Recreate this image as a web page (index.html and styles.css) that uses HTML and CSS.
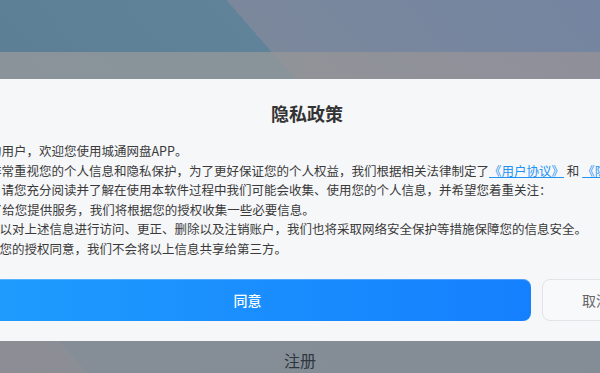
FILE: index.html
```html
<!DOCTYPE html>
<html lang="zh-CN">
<head>
    <meta charset="UTF-8">
    <meta name="viewport" content="width=device-width, initial-scale=1.0">
    <title>城通网盘 - 隐私政策</title>
    <link rel="stylesheet" href="styles.css">
</head>
<body>

    <header class="top-bar"></header>
    <div class="tab-band"></div>

    <section class="privacy-dialog">
        <h2 class="dialog-title">隐私政策</h2>
        <div class="dialog-body">
            <p>尊敬的用户，欢迎您使用城通网盘APP。</p>
            <p>我们非常重视您的个人信息和隐私保护，为了更好保证您的个人权益，我们根据相关法律制定了<a href="#">《用户协议》</a> 和 <a href="#">《隐私政策》</a></p>
            <p>为此，请您充分阅读并了解在使用本软件过程中我们可能会收集、使用您的个人信息，并希望您着重关注：</p>
            <p>1. 为了给您提供服务，我们将根据您的授权收集一些必要信息。</p>
            <p>2.您可以对上述信息进行访问、更正、删除以及注销账户，我们也将采取网络安全保护等措施保障您的信息安全。</p>
            <p>3.未经您的授权同意，我们不会将以上信息共享给第三方。</p>
        </div>
        <div class="dialog-actions">
            <button class="btn-agree">同意</button>
            <button class="btn-cancel">取消</button>
        </div>
    </section>

    <footer class="bottom-bar">注册</footer>

</body>
</html>
```

FILE: styles.css
```css
/* Global Styles */
html,
body {
    margin: 0;
    padding: 0;
    overflow: hidden;
}

body {
    width: 600px;
    height: 373px;
    font-family: "Noto Sans CJK SC", "Noto Sans", sans-serif;
    color: #3a3a3a;
    background-color: #848d96;
}

/* page behind the dialog (dimmed) */
.top-bar {
    height: 52px;
    background: linear-gradient(49deg, #5c7f95 0, #61839a 205px, #7b889c 205px, #7485a1 100%);
}

.tab-band {
    height: 27px;
    background: linear-gradient(49deg, #8a939a 0, #88949a 223px, #909398 223px, #8f8f9a 100%);
}

.bottom-bar {
    height: 32px;
    box-sizing: border-box;
    padding-top: 7px;
    line-height: 24px;
    text-align: center;
    font-size: 16px;
    color: #2e3741;
    background: linear-gradient(48deg, #8d8e95 0, #8b8e94 65px, #858e96 65px, #848d96 100%);
}

/* dialog */
.privacy-dialog {
    width: 734px;
    margin-left: -60px;
    box-sizing: border-box;
    height: 262px;
    padding: 22px 24px 20px;
    background-color: #f6f7f9;
    box-shadow: 0 1px 0 rgba(0, 0, 0, 0.12);
}

.dialog-title {
    margin: 0;
    font-size: 18px;
    line-height: 24px;
    font-weight: bold;
    color: #333;
    text-align: center;
}

.dialog-body {
    margin-top: 16px;
    font-size: 12.5px;
    line-height: 19.6px;
}

.dialog-body p {
    margin: 0;
    white-space: nowrap;
}

.dialog-body a {
    color: #1f93f5;
    text-decoration: underline;
}

.dialog-actions {
    display: flex;
    gap: 11px;
    margin-top: 20px;
}

.dialog-actions button {
    height: 42px;
    border-radius: 8px;
    font-family: inherit;
    font-size: 14px;
}

.btn-agree {
    flex: 1;
    border: none;
    color: white;
    font-weight: 500;
    background: linear-gradient(90deg, #1f9dfd, #1580fe);
    box-shadow: inset 0 1px 0 rgba(255, 255, 255, 0.25);
}

.btn-cancel {
    width: 108px;
    border: 1px solid #e2e4e8;
    background-color: #f8f9fb;
    color: #666;
}
```
